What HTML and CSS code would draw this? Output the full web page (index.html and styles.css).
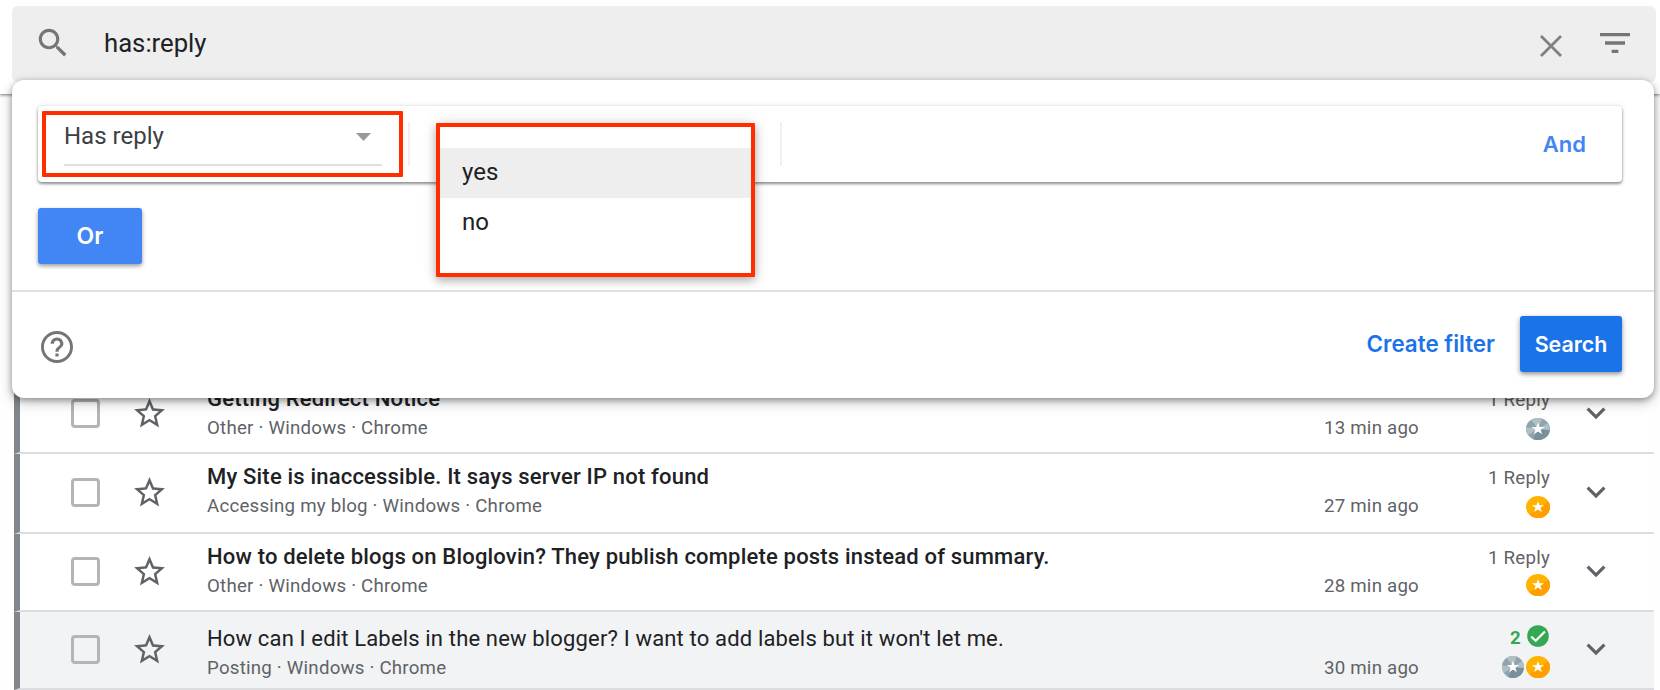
FILE: index.html
```
<!DOCTYPE html>
<html lang="en">
<head>
    <meta charset="UTF-8">
    <meta name="viewport" content="width=device-width, initial-scale=1.0">
    <title>Community search</title>
    <link rel="stylesheet" href="styles.css">
</head>
<body>
    <!-- shared icons -->
    <svg class="sprite" width="0" height="0">
        <symbol id="star" viewBox="0 0 24 24">
            <path d="M22 9.24l-7.19-.62L12 2 9.19 8.63 2 9.24l5.46 4.73L5.82 21 12 17.27 18.18 21l-1.63-7.03L22 9.24zM12 15.4l-3.76 2.27 1-4.28-3.32-2.88 4.38-.38L12 6.1l1.71 4.04 4.38.38-3.32 2.88 1 4.28L12 15.4z"/>
        </symbol>
        <symbol id="chevron" viewBox="0 0 24 24">
            <path d="M16.59 8.59L12 13.17 7.41 8.59 6 10l6 6 6-6z"/>
        </symbol>
        <symbol id="badge-gold" viewBox="0 0 24 24" preserveAspectRatio="none">
            <circle cx="12" cy="12" r="12" fill="#ffb300"/>
            <path d="M22.4 6A12 12 0 0 1 3 20z" fill="#ffa000"/>
            <path d="M12 5.6l1.5 4.5h4.7l-3.8 2.8 1.4 4.5-3.8-2.8-3.8 2.8 1.4-4.5-3.8-2.8h4.7z" fill="#fff"/>
        </symbol>
        <symbol id="badge-silver" viewBox="0 0 24 24" preserveAspectRatio="none">
            <circle cx="12" cy="12" r="12" fill="#90a4ae"/>
            <path d="M12 12L5 2.3A12 12 0 0 1 16 .7z" fill="#b0bec5"/>
            <path d="M12 12L.2 10A12 12 0 0 1 5 2.3z" fill="#90a4ae"/>
            <path d="M12 12L.2 10A12 12 0 0 0 2 18.5z" fill="#b0bec5"/>
            <path d="M12 12L23.8 13A12 12 0 0 1 18 22.4z" fill="#78909c"/>
            <path d="M12 12L18 22.4A12 12 0 0 1 7 22.9z" fill="#78909c"/>
            <path d="M12 12L22 5.4A12 12 0 0 1 23.8 13z" fill="#b0bec5"/>
            <path d="M12 5l1.6 4.9h5.1l-4.1 3 1.5 4.9-4.1-3-4.1 3 1.5-4.9-4.1-3h5.1z" fill="#fff"/>
        </symbol>
    </svg>

    <header class="header">
        <div class="search-bar">
            <svg class="icon-search" viewBox="0 0 24 24"><path d="M15.5 14h-.79l-.28-.27C15.41 12.59 16 11.11 16 9.5 16 5.91 13.09 3 9.5 3S3 5.91 3 9.5 5.91 16 9.5 16c1.61 0 3.09-.59 4.23-1.57l.27.28v.79l5 4.99L20.49 19l-4.99-5zm-6 0C7.01 14 5 11.99 5 9.5S7.01 5 9.5 5 14 7.01 14 9.5 11.99 14 9.5 14z"/></svg>
            <span class="query">has:reply</span>
            <svg class="icon-clear" viewBox="0 0 24 24"><path d="M2 2l20 20M22 2L2 22"/></svg>
            <svg class="icon-filter" viewBox="0 0 24 24"><path d="M10 18h4v-2h-4v2zM3 6v2h18V6H3zm3 7h12v-2H6v2z"/></svg>
        </div>
    </header>

    <main class="threads">
        <div class="thread">
            <span class="checkbox"></span>
            <svg class="star"><use href="#star"/></svg>
            <div class="info">
                <div class="title">Getting Redirect Notice</div>
                <div class="meta">Other · Windows · Chrome</div>
            </div>
            <div class="time">13 min ago</div>
            <div class="replies">
                <div>1 Reply</div>
                <div class="badges"><svg class="badge"><use href="#badge-silver"/></svg></div>
            </div>
            <svg class="chevron"><use href="#chevron"/></svg>
        </div>
        <div class="thread tall">
            <span class="checkbox"></span>
            <svg class="star"><use href="#star"/></svg>
            <div class="info">
                <div class="title">My Site is inaccessible. It says server IP not found</div>
                <div class="meta">Accessing my blog · Windows · Chrome</div>
            </div>
            <div class="time">27 min ago</div>
            <div class="replies">
                <div>1 Reply</div>
                <div class="badges"><svg class="badge"><use href="#badge-gold"/></svg></div>
            </div>
            <svg class="chevron"><use href="#chevron"/></svg>
        </div>
        <div class="thread">
            <span class="checkbox"></span>
            <svg class="star"><use href="#star"/></svg>
            <div class="info">
                <div class="title">How to delete blogs on Bloglovin? They publish complete posts instead of summary.</div>
                <div class="meta">Other · Windows · Chrome</div>
            </div>
            <div class="time">28 min ago</div>
            <div class="replies tight">
                <div>1 Reply</div>
                <div class="badges"><svg class="badge"><use href="#badge-gold"/></svg></div>
            </div>
            <svg class="chevron"><use href="#chevron"/></svg>
        </div>
        <div class="thread read">
            <span class="checkbox"></span>
            <svg class="star"><use href="#star"/></svg>
            <div class="info">
                <div class="title">How can I edit Labels in the new blogger? I want to add labels but it won't let me.</div>
                <div class="meta">Posting · Windows · Chrome</div>
            </div>
            <div class="time">30 min ago</div>
            <div class="replies">
                <div class="answered">2
                    <svg class="check" viewBox="0 0 22 22"><circle cx="11" cy="11" r="10.8" fill="#34a853"/><path d="M4.2 11.6l4.5 4.2 9.2-9.3" fill="none" stroke="#fff" stroke-width="2.2"/></svg>
                </div>
                <div class="badges">
                    <svg class="badge small"><use href="#badge-silver"/></svg>
                    <svg class="badge"><use href="#badge-gold"/></svg>
                </div>
            </div>
            <svg class="chevron"><use href="#chevron"/></svg>
        </div>
    </main>

    <section class="panel">
        <div class="panel-top">
            <div class="condition">
                <div class="field">
                    <div class="select">
                        <span>Has reply</span>
                        <span class="arrow"></span>
                    </div>
                </div>
                <span class="divider"></span>
                <div class="menu">
                    <div class="option selected">yes</div>
                    <div class="option">no</div>
                </div>
                <span class="divider second"></span>
                <button class="and">And</button>
            </div>
            <button class="or">Or</button>
        </div>
        <div class="panel-bottom">
            <svg class="help" viewBox="0 0 20 20"><path d="M9 16h2v-2H9v2zm1-16C4.48 0 0 4.48 0 10s4.48 10 10 10 10-4.48 10-10S15.52 0 10 0zm0 18.2c-4.52 0-8.2-3.68-8.2-8.2S5.48 1.8 10 1.8s8.2 3.68 8.2 8.2-3.68 8.2-8.2 8.2zM10 4C7.79 4 6 5.79 6 8h2c0-1.1.9-2 2-2s2 .9 2 2c0 2-3 1.75-3 5h2c0-2.25 3-2.5 3-5 0-2.21-1.79-4-4-4z"/></svg>
            <button class="create">Create filter</button>
            <button class="search">Search</button>
        </div>
    </section>
</body>
</html>
```
FILE: styles.css
```
* {
    box-sizing: border-box;
}

body {
    margin: 0;
    height: 690px;
    display: flex;
    flex-direction: column;
    position: relative;
    overflow: hidden;
    background-color: #fefefe;
    font-family: Roboto, Arial, sans-serif;
    color: #202124;
}

svg {
    display: block;
    flex-shrink: 0;
    fill: #5f6368;
}

.sprite {
    position: absolute;
}

button {
    font-family: Inter, "Open Sans", sans-serif;
    font-size: 22px;
    font-weight: 600;
    padding: 0;
    border: none;
    border-radius: 3px;
    background: none;
    cursor: pointer;
}

/* header */

.header {
    height: 94px;
    flex-shrink: 0;
    padding: 6px 4px 0 12px;
    background-color: #fff;
    box-shadow: 0 1px 3px rgba(0, 0, 0, 0.55);
    z-index: 1;
}

.search-bar {
    height: 76px;
    display: flex;
    align-items: center;
    padding: 0 21px 0 22px;
    border-radius: 6px;
    background-color: #eee;
}

.icon-search {
    width: 38px;
    height: 38px;
    margin-bottom: 3px;
    fill: #757575;
}

.query {
    flex: 1;
    margin-left: 32px;
    margin-bottom: 2px;
    font-size: 25.7px;
    line-height: 30px;
}

.icon-clear {
    width: 24px;
    height: 24px;
    margin-top: 3px;
    fill: none;
    stroke: #808080;
    stroke-width: 2.8;
}

.icon-filter {
    width: 40px;
    height: 40px;
    margin-left: 32px;
    margin-bottom: 2px;
    fill: #757575;
}

/* thread list */

.threads {
    flex: 1;
    display: flex;
    flex-direction: column;
    justify-content: flex-end;
    margin: 0 6px 0 14px;
}

.thread {
    height: 78px;
    display: flex;
    align-items: center;
    padding: 0 39px 2px 51px;
    border-left: 6px solid #80868b;
    border-bottom: 2px solid #dadce0;
    background-color: #fff;
}

.thread.tall {
    height: 80px;
}

.checkbox {
    width: 29px;
    height: 29px;
    border: 3px solid #b5b5b5;
    border-radius: 4px;
}

.star {
    width: 37px;
    height: 37px;
    margin-left: 31px;
}

.info {
    flex: 1;
    align-self: flex-start;
    padding-top: 8px;
    margin-left: 39px;
}

.title {
    font-size: 22px;
    font-weight: 500;
    line-height: 30px;
    letter-spacing: 0.19px;
}

.meta,
.time,
.replies {
    font-size: 18.7px;
    line-height: 26px;
    letter-spacing: 0.22px;
    color: #5f6368;
}

.time {
    align-self: flex-start;
    padding-top: 39px;
}

.meta {
    margin-top: 1px;
}

.replies {
    width: 131px;
    align-self: flex-start;
    padding-top: 11px;
    text-align: right;
}

.badges {
    display: flex;
    justify-content: flex-end;
    gap: 2px;
    margin-top: 5px;
}

.tight .badges {
    margin-top: 3px;
}

.badge {
    width: 24px;
    height: 22px;
}

.badge.small {
    width: 22px;
}

.chevron {
    width: 38px;
    height: 38px;
    margin-left: 27px;
}

.read {
    background-color: #f1f3f4;
}

.read .title {
    font-weight: 400;
    letter-spacing: 0.16px;
}

.read .info {
    padding-top: 12px;
}

.read .time {
    padding-top: 43px;
}

.read .replies {
    padding-top: 13px;
}

.answered {
    display: flex;
    justify-content: flex-end;
    gap: 6px;
    padding-right: 1px;
    font-weight: 700;
    color: #34a853;
}

.check {
    width: 22px;
    height: 22px;
}

/* advanced search panel */

.panel {
    position: absolute;
    top: 80px;
    left: 12px;
    width: 1642px;
    height: 318px;
    z-index: 2;
    border-radius: 12px;
    background-color: #fff;
    box-shadow: 0 2px 6px rgba(0, 0, 0, 0.35), 0 5px 14px rgba(0, 0, 0, 0.2);
}

.panel-top {
    height: 212px;
    padding: 26px 32px 0 26px;
    border-bottom: 2px solid #e0e0e0;
}

.condition {
    height: 76px;
    display: flex;
    position: relative;
    padding: 5px 36px 0 4px;
    border-radius: 4px;
    box-shadow: 0 2px 3px rgba(0, 0, 0, 0.4), 0 0 4px rgba(0, 0, 0, 0.15);
}

.field {
    width: 361px;
    height: 66px;
    padding: 6px 17px 0 18px;
    border: 4px solid #ff2d00;
    border-radius: 1px;
}

.select {
    height: 45px;
    display: flex;
    justify-content: space-between;
    font-size: 24px;
    line-height: 30px;
    padding-right: 11px;
    border-bottom: 2px solid #e0e0e0;
    color: #3c4043;
}

.arrow {
    width: 15px;
    height: 8px;
    margin-top: 12px;
    background-color: #999;
    clip-path: polygon(0 0, 100% 0, 50% 100%);
}

.divider {
    width: 2px;
    height: 44px;
    margin: 11px 0 0 5px;
    background-color: #f0f0f0;
}

.divider.second {
    margin-left: 370px;
}

/* opened dropdown, floats over the card */
.menu {
    position: absolute;
    top: 17px;
    left: 398px;
    width: 319px;
    height: 154px;
    padding-top: 21px;
    border: 4px solid #ff2d00;
    border-radius: 1px;
    background-color: #fff;
    box-shadow: 0 4px 9px rgba(0, 0, 0, 0.25), 0 0 16px rgba(0, 0, 0, 0.12);
}

.option {
    height: 50px;
    padding-left: 22px;
    font-size: 24px;
    line-height: 49px;
}

.option.selected {
    background-color: #eee;
}

.and {
    margin: 0 0 6px auto;
    color: #4285f4;
}

.or {
    width: 104px;
    height: 56px;
    margin-top: 26px;
    font-size: 23px;
    background-color: #4285f4;
    color: #fff;
    box-shadow: 0 2px 4px rgba(0, 0, 0, 0.4);
}

.panel-bottom {
    display: flex;
    align-items: flex-start;
    padding: 24px 32px 0 29px;
}

.help {
    width: 32px;
    height: 32px;
    margin-top: 15px;
    fill: #757575;
}

.create {
    height: 55px;
    margin-left: auto;
    font-size: 22.4px;
    color: #1a73e8;
}

.search {
    width: 102px;
    height: 56px;
    margin-left: 25px;
    font-size: 21.4px;
    background-color: #1a73e8;
    color: #fff;
    box-shadow: 0 2px 5px rgba(0, 0, 0, 0.45);
}
```
